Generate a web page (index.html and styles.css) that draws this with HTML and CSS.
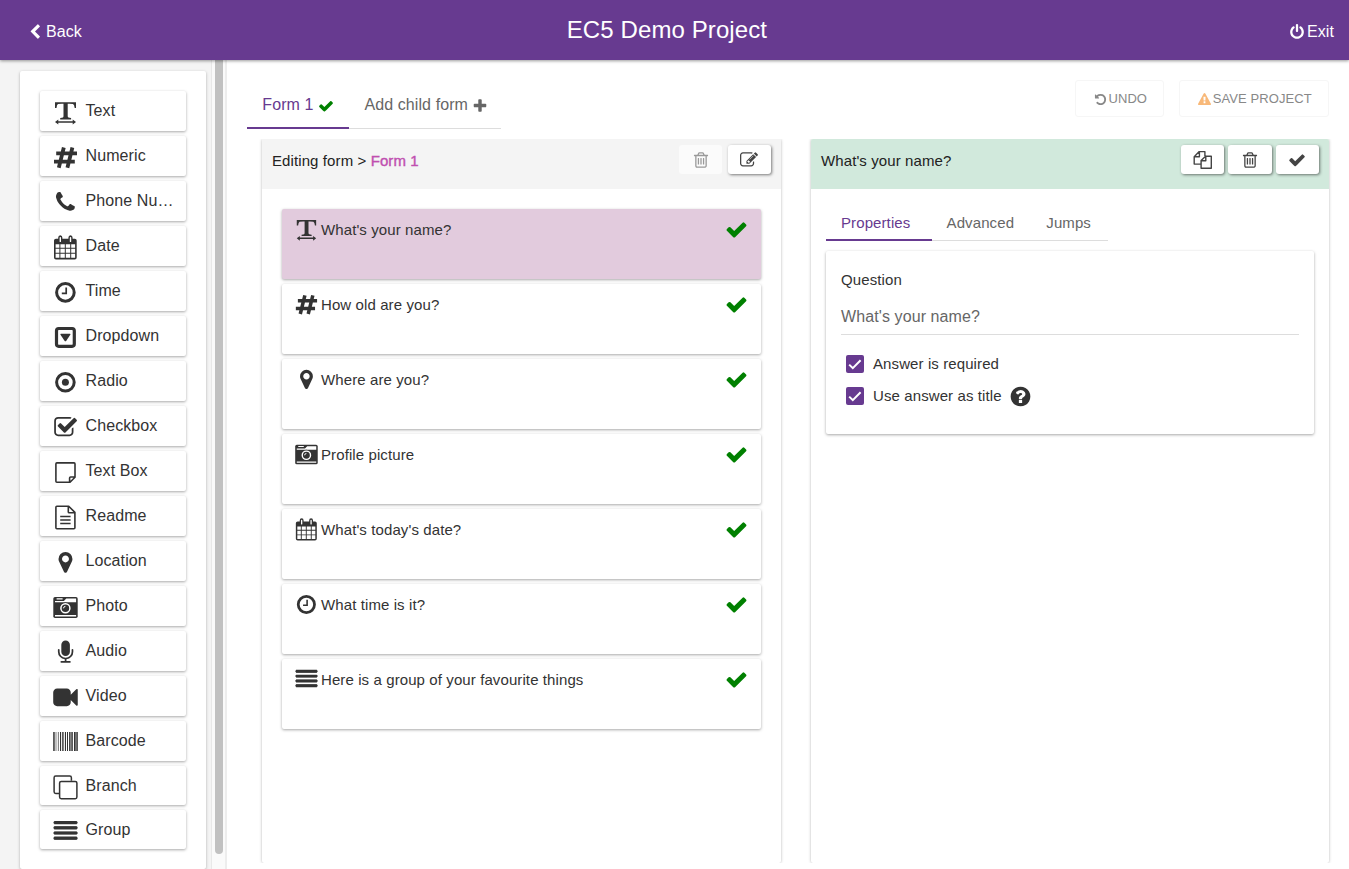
FILE: index.html
```
<!DOCTYPE html>
<html lang="en">
<head>
<meta charset="utf-8">
<title>EC5 Demo Project</title>
<link rel="stylesheet" href="styles.css">
</head>
<body>
<svg class="sprite" aria-hidden="true">
  <symbol id="text" viewBox="0 0 26 26"><path d="M3 2.300h21v5.800h-1.300q-.4-3.400-1.700-4-1-.4-5.300-.3V16q0 1.300.8 1.600.9.400 2.600.5v1.400H8.200v-1.400q2-.1 2.700-.5.600-.3.600-1.600V3.800q-4.300-.1-5.500.300-1.200.6-1.500 4H3z"/><path d="M3 22l3.300-2.600v1.800h14.400v-1.800l3.300 2.600-3.300 2.600v-1.800H6.300v1.800z"/></symbol>
  <symbol id="hash" viewBox="0 0 26 26"><path d="M11.800 2.500L6.800 22.700M20.400 2.500L15.400 22.700M4.200 8.400H25M2 16.700H22.800" fill="none" stroke="currentColor" stroke-width="3.800"/></symbol>
  <symbol id="phone" viewBox="0 0 26 26"><path transform="translate(1.400 .2) scale(.0134)" d="M1600 1240q0 27-10 70.500t-21 68.500q-21 50-122 106-94 51-186 51-27 0-53-3.500t-57.500-12.500-47-14.500-55.500-20.500-49-18q-98-35-175-83-127-79-264-216t-216-264q-48-77-83-175-3-9-18-49t-20.500-55.500-14.500-47-12.500-57.500-3.500-53q0-92 51-186 56-101 106-122 25-11 68.500-21t70.500-10q14 0 21 3 18 6 53 76 11 19 30 54t35 63.500 31 53.500q3 4 17.500 25t21.500 35.500 7 28.500q0 20-28.500 50t-62 55-62 53-28.500 46q0 9 5 22.500t8.500 20.500 14 24 11.500 19q76 137 174 235t235 174q2 1 19 11.500t24 14 20.500 8.500 22.500 5q18 0 46-28.500t53-62 55-62 50-28.500q14 0 28.500 7t35.500 21.500 25 17.500q25 15 53.500 31t63.500 35 54 30q70 35 76 53 3 7 3 21z"/></symbol>
  <symbol id="calendar" viewBox="0 0 26 26"><path fill-rule="evenodd" d="M4 3.700h2.200V2.800Q6.200.3 8.300.3t2.100 2.500v.9h6V2.800q0-2.500 2.100-2.500t2.100 2.500v.9h2.200q1.900 0 1.900 1.900v17q0 1.900-1.900 1.900H4q-2 0-2-1.900v-17q0-1.900 2-1.900zM7.600 2.800v3.600q0 .7.700.7t.7-.7V2.800q0-.8-.7-.8t-.7.8zm10.200 0v3.600q0 .7.700.7t.7-.7V2.800q0-.8-.7-.8t-.7.8zM3.600 9.200v3.600h3.800V9.200zm4.800 0v3.600h4.400V9.200zm5.400 0v3.600h4.400V9.200zm5.400 0v3.600h3.900V9.200zM3.600 13.800v4h3.800v-4zm4.800 0v4h4.400v-4zm5.400 0v4h4.400v-4zm5.400 0v4h3.900v-4zM3.600 18.800v4h3.800v-4zm4.800 0v4h4.400v-4zm5.400 0v4h4.400v-4zm5.400 0v4h3.900v-4z"/></symbol>
  <symbol id="clock" viewBox="0 0 26 26"><g fill="none" stroke="currentColor"><circle cx="13.400" cy="12.400" r="8.800" stroke-width="3"/><path d="M14.200 7.400v5.900H9.800" stroke-width="1.700"/></g></symbol>
  <symbol id="dropdown" viewBox="0 0 26 26"><rect x="4.500" y="3.500" width="17.800" height="17.800" rx="2.200" fill="none" stroke="currentColor" stroke-width="3.200"/><path d="M9 8.800h8.800q1 0 .5 1l-4 5.900q-.9 1.200-1.800 0L8.500 9.800q-.5-1 .5-1z"/></symbol>
  <symbol id="radio" viewBox="0 0 26 26"><circle cx="13.400" cy="12.300" r="8.800" fill="none" stroke="currentColor" stroke-width="3"/><circle cx="13.400" cy="12.300" r="3.500"/></symbol>
  <symbol id="checkbox" viewBox="0 0 26 26"><path transform="translate(1.300 .2) scale(.0137)" d="M1472 930v318q0 119-84.500 203.500t-203.500 84.500h-832q-119 0-203.500-84.500t-84.500-203.500v-832q0-119 84.500-203.500t203.500-84.500h832q63 0 117 25 15 7 18 23 3 17-9 29l-49 49q-10 10-23 10-3 0-9-2-23-6-45-6h-832q-66 0-113 47t-47 113v832q0 66 47 113t113 47h832q66 0 113-47t47-113v-254q0-13 9-22l64-64q10-10 23-10 6 0 12 3 20 8 20 29zm231-489l-814 814q-24 24-57 24t-57-24l-430-430q-24-24-24-57t24-57l110-110q24-24 57-24t57 24l263 263 647-647q24-24 57-24t57 24l110 110q24 24 24 57t-24 57z"/></symbol>
  <symbol id="note" viewBox="0 0 26 26"><path d="M4.900 2.900h17.100q1 0 1 1v13.300l-5 5H4.900q-1 0-1-1V3.900q0-1 1-1zM17.600 22v-4q0-1 1-1h4.200" fill="none" stroke="currentColor" stroke-width="1.600"/></symbol>
  <symbol id="file" viewBox="0 0 26 26"><path d="M4.900 1.200h11.800l6.200 6.200v15.300q0 1-1 1h-17q-1 0-1-1V2.200q0-1 1-1zM16.300 1.300v5.600q0 .9.900.9h5.500M8.200 11.500h10.400M8.200 15h10.400M8.200 18.500h10.400" fill="none" stroke="currentColor" stroke-width="1.600"/></symbol>
  <symbol id="pin" viewBox="0 0 26 26"><path transform="translate(1.300 .2) scale(.0136)" d="M1152 640q0-106-75-181t-181-75-181 75-75 181 75 181 181 75 181-75 75-181zm256 0q0 109-33 179l-364 774q-16 33-47.500 52t-67.500 19-67.500-19-46.500-52l-365-774q-33-70-33-179 0-212 150-362t362-150 362 150 150 362z"/></symbol>
  <symbol id="photo" viewBox="0 0 26 26"><rect x="1.300" y="2" width="24.400" height="21" rx="1.700"/><path d="M3 7.300V5.900h8.900l2.400-2.300h9.800v3.700zM4.600 3.300h6v1.100h-6zM3 20h21.100v1.400H3z" fill="#fff"/><circle cx="13.400" cy="13.300" r="5.900"/><circle cx="13.400" cy="13.300" r="4.500" fill="none" stroke="#fff" stroke-width="1.500"/><path d="M11.500 13.300q0-1.900 1.900-1.900" fill="none" stroke="#fff" stroke-width="1"/></symbol>
  <symbol id="mic" viewBox="0 0 26 26"><path transform="translate(1.600 .5) scale(.0134)" d="M1472 704v128q0 221-147.500 384.500t-364.500 187.500v132h256q26 0 45 19t19 45-19 45-45 19h-640q-26 0-45-19t-19-45 19-45 45-19h256v-132q-217-24-364.500-187.500t-147.500-384.500v-128q0-26 19-45t45-19 45 19 19 45v128q0 185 131.500 316.500t316.500 131.500 316.500-131.500 131.500-316.500v-128q0-26 19-45t45-19 45 19 19 45zm-256-384v512q0 132-94 226t-226 94-226-94-94-226v-512q0-132 94-226t226-94 226 94 94 226z"/></symbol>
  <symbol id="video" viewBox="0 0 26 26"><path transform="translate(1.200 .1) scale(.0137)" d="M1792 352v1088q0 42-39 59-13 5-25 5-27 0-45-19l-403-403v166q0 119-84.500 203.500t-203.500 84.500h-704q-119 0-203.500-84.500t-84.500-203.500v-704q0-119 84.500-203.500t203.500-84.500h704q119 0 203.500 84.500t84.500 203.500v165l403-402q18-19 45-19 12 0 25 5 39 17 39 59z"/></symbol>
  <symbol id="barcode" viewBox="0 0 26 26"><path d="M1.200 2h1.500v19H1.200zM3.700 2h.6v19h-.6zM5.900 2h.7v19h-.7zM8 2h1.100v19H8zM10.200 2h1.400v19h-1.400zM12.900 2h1.100v19h-1.100zM15 2h1v19h-1zM17.100 2h1.500v19h-1.500zM19.300 2h1.500v19h-1.500zM22 2h1.700v19H22zM24.300 2h1.500v19h-1.500z"/></symbol>
  <symbol id="branch" viewBox="0 0 26 26"><g fill="none" stroke="currentColor" stroke-width="1.500"><rect x="7.600" y="6.400" width="17.300" height="17.300" rx="1.600"/><path d="M7 18.400H3.700Q2.100 18.400 2.100 16.800V2.700Q2.100 1.100 3.700 1.100h14Q19.400 1.100 19.400 2.700v3"/></g></symbol>
  <symbol id="group" viewBox="0 0 26 26"><path d="M2.200 3.600h22.600M2.200 8.800h22.600M2.200 14h22.600M2.200 19.200h22.600" fill="none" stroke="currentColor" stroke-width="3.200"/><path d="M2.600 3.600h21.900M2.600 8.800h21.900M2.600 14h21.900M2.600 19.200h21.900" fill="none" stroke="currentColor" stroke-width="2.400" stroke-linecap="round"/></symbol>
  <symbol id="check" viewBox="0 0 1792 1792"><path d="M1671 566q0 40-28 68l-724 724-136 136q-28 28-68 28t-68-28l-136-136-362-362q-28-28-28-68t28-68l136-136q28-28 68-28t68 28l294 295 656-657q28-28 68-28t68 28l136 136q28 28 28 68z"/></symbol>
  <symbol id="plus" viewBox="0 0 1792 1792"><path d="M1600 736v192q0 40-28 68t-68 28h-416v416q0 40-28 68t-68 28h-192q-40 0-68-28t-28-68v-416h-416q-40 0-68-28t-28-68v-192q0-40 28-68t68-28h416v-416q0-40 28-68t68-28h192q40 0 68 28t28 68v416h416q40 0 68 28t28 68z"/></symbol>
  <symbol id="edit" viewBox="0 0 1792 1792"><path d="M888 1184l116-116-152-152-116 116v56h96v96h56zm440-720q-16-16-33 1l-350 350q-17 17-1 33t33-1l350-350q17-17 1-33zm80 594v190q0 119-84.500 203.500t-203.500 84.500h-832q-119 0-203.500-84.500t-84.500-203.500v-832q0-119 84.500-203.500t203.500-84.500h832q63 0 117 25 15 7 18 23 3 17-9 29l-49 49q-14 14-32 8-23-6-45-6h-832q-66 0-113 47t-47 113v832q0 66 47 113t113 47h832q66 0 113-47t47-113v-126q0-13 9-22l64-64q15-15 35-7t20 29zm-96-738l288 288-672 672h-288v-288zm444 132l-92 92-288-288 92-92q28-28 68-28t68 28l152 152q28 28 28 68t-28 68z"/></symbol>
  <symbol id="trash" viewBox="0 0 1792 1792"><path d="M704 736v576q0 14-9 23t-23 9h-64q-14 0-23-9t-9-23v-576q0-14 9-23t23-9h64q14 0 23 9t9 23zm256 0v576q0 14-9 23t-23 9h-64q-14 0-23-9t-9-23v-576q0-14 9-23t23-9h64q14 0 23 9t9 23zm256 0v576q0 14-9 23t-23 9h-64q-14 0-23-9t-9-23v-576q0-14 9-23t23-9h64q14 0 23 9t9 23zm128 724v-948h-896v948q0 22 7 40.500t14.500 27 10.500 8.500h832q3 0 10.500-8.500t14.500-27 7-40.500zm-672-1076h448l-48-117q-7-9-17-11h-317q-10 2-17 11zm928 32v64q0 14-9 23t-23 9h-96v948q0 83-47 143.500t-113 60.500h-832q-66 0-113-58.500t-47-141.500v-952h-96q-14 0-23-9t-9-23v-64q0-14 9-23t23-9h309l70-167q15-37 54-63t79-26h320q40 0 79 26t54 63l70 167h309q14 0 23 9t9 23z"/></symbol>
  <symbol id="copy" viewBox="0 0 20 20"><path d="M7.400 14.100H1.200V6.700L6.200 1.600h5.700v4.500M6.400 1.700v5.100H1.400M8.100 18.200V10.600L12.600 6.200h5.700v12zM12.800 6.300v4.400H8.200" fill="none" stroke="currentColor" stroke-width="1.400" stroke-linejoin="round"/></symbol>
  <symbol id="undo" viewBox="0 0 1792 1792"><path d="M1664 896q0 156-61 298t-164 245-245 164-298 61q-172 0-327-72.500t-264-204.500q-7-10-6.500-22.500t8.500-20.500l137-138q10-9 25-9 16 2 23 12 73 95 179 147t225 52q104 0 198.500-40.500t163.500-109.500 109.500-163.500 40.500-198.500-40.500-198.500-109.500-163.500-163.500-109.500-198.500-40.500q-98 0-188 35.500t-160 101.500l137 138q31 30 14 69-17 40-59 40h-448q-26 0-45-19t-19-45v-448q0-42 40-59 39-17 69 14l130 129q107-101 244.500-156.500t284.500-55.500q156 0 298 61t245 164 164 245 61 298z"/></symbol>
  <symbol id="warning" viewBox="0 0 1792 1792"><path d="M1024 1375v-190q0-14-9.500-23.500t-22.500-9.500h-192q-13 0-22.500 9.500t-9.500 23.500v190q0 14 9.500 23.500t22.500 9.500h192q13 0 22.500-9.500t9.500-23.500zm-2-374l18-459q0-12-10-19-13-11-24-11h-220q-11 0-24 11-10 7-10 21l17 457q0 10 10 16.500t24 6.500h185q14 0 23.500-6.500t10.500-16.500zm-14-934l768 1408q35 63-2 126-17 29-46.500 46t-63.500 17h-1536q-34 0-63.500-17t-46.500-46q-37-63-2-126l768-1408q17-31 47-49t65-18 65 18 47 49z"/></symbol>
  <symbol id="power" viewBox="0 0 1792 1792"><path d="M1664 896q0 156-61 298t-164 245-245 164-298 61-298-61-245-164-164-245-61-298q0-182 80.500-343t226.500-270q43-32 95.500-25t83.500 50q32 42 24.500 94.500t-49.500 84.500q-98 74-151.500 181t-53.500 228q0 104 40.500 198.500t109.500 163.500 163.500 109.500 198.500 40.500 198.500-40.500 163.500-109.500 109.500-163.500 40.500-198.500q0-121-53.500-228t-151.500-181q-42-32-49.500-84.500t24.500-94.500q31-43 84-50t95 25q146 109 226.500 270t80.500 343zm-640-768v640q0 52-38 90t-90 38-90-38-38-90v-640q0-52 38-90t90-38 90 38 38 90z"/></symbol>
  <symbol id="chevron" viewBox="0 0 1792 1792"><path d="M1427 301l-531 531 531 531q19 19 19 45t-19 45l-166 166q-19 19-45 19t-45-19l-742-742q-19-19-19-45t19-45l742-742q19-19 45-19t45 19l166 166q19 19 19 45t-19 45z"/></symbol>
  <symbol id="help" viewBox="0 0 1792 1792"><path d="M1024 1376v-192q0-14-9-23t-23-9h-192q-14 0-23 9t-9 23v192q0 14 9 23t23 9h192q14 0 23-9t9-23zm256-672q0-88-55.500-163t-138.500-116-170-41q-243 0-371 213-15 24 8 42l132 100q7 6 19 6 16 0 25-12 53-68 86-92 34-24 86-24 48 0 85.500 26t37.500 59q0 38-20 61t-68 45q-63 28-115.500 86.500t-52.500 125.500v36q0 14 9 23t23 9h192q14 0 23-9t9-23q0-19 21.500-49.500t54.500-49.500q32-18 49-28.500t46-35 44.500-48 28-60.500 12.500-81zm384 192q0 209-103 385.500t-279.500 279.500-385.500 103-385.500-103-279.500-279.500-103-385.500 103-385.500 279.500-279.500 385.500-103 385.500 103 279.500 279.500 103 385.500z"/></symbol>
  <symbol id="tick" viewBox="0 0 18 18"><path d="M3.200 9.600l3.600 3.600 7.800-8" fill="none" stroke="currentColor" stroke-width="2"/></symbol>
</svg>

<header class="topbar">
  <a class="topbar-back"><svg class="i16"><use href="#chevron"/></svg><span>Back</span></a>
  <h1 class="topbar-title">EC5 Demo Project</h1>
  <a class="topbar-exit"><svg class="i16"><use href="#power"/></svg><span>Exit</span></a>
</header>

<div class="layout">
  <aside class="sidebar">
    <ul class="inputs">
      <li class="input-card"><svg class="input-icon"><use href="#text"/></svg><span>Text</span></li>
      <li class="input-card"><svg class="input-icon"><use href="#hash"/></svg><span>Numeric</span></li>
      <li class="input-card"><svg class="input-icon"><use href="#phone"/></svg><span>Phone Nu…</span></li>
      <li class="input-card"><svg class="input-icon"><use href="#calendar"/></svg><span>Date</span></li>
      <li class="input-card"><svg class="input-icon"><use href="#clock"/></svg><span>Time</span></li>
      <li class="input-card"><svg class="input-icon"><use href="#dropdown"/></svg><span>Dropdown</span></li>
      <li class="input-card"><svg class="input-icon"><use href="#radio"/></svg><span>Radio</span></li>
      <li class="input-card"><svg class="input-icon"><use href="#checkbox"/></svg><span>Checkbox</span></li>
      <li class="input-card"><svg class="input-icon"><use href="#note"/></svg><span>Text Box</span></li>
      <li class="input-card"><svg class="input-icon"><use href="#file"/></svg><span>Readme</span></li>
      <li class="input-card"><svg class="input-icon"><use href="#pin"/></svg><span>Location</span></li>
      <li class="input-card"><svg class="input-icon"><use href="#photo"/></svg><span>Photo</span></li>
      <li class="input-card"><svg class="input-icon"><use href="#mic"/></svg><span>Audio</span></li>
      <li class="input-card"><svg class="input-icon"><use href="#video"/></svg><span>Video</span></li>
      <li class="input-card"><svg class="input-icon"><use href="#barcode"/></svg><span>Barcode</span></li>
      <li class="input-card short"><svg class="input-icon"><use href="#branch"/></svg><span>Branch</span></li>
      <li class="input-card short"><svg class="input-icon"><use href="#group"/></svg><span>Group</span></li>
    </ul>
  </aside>
  <div class="scrollbar"><div class="scrollbar-thumb"></div></div>

  <main class="main">
    <div class="toolbar">
      <nav class="tabs form-tabs">
        <a class="tab active">Form 1 <svg class="i16 green"><use href="#check"/></svg></a>
        <a class="tab">Add child form<svg class="i16 plus"><use href="#plus"/></svg></a>
      </nav>
      <div class="actions">
        <button class="action undo"><svg class="i13"><use href="#undo"/></svg>UNDO</button>
        <button class="action save"><svg class="i13 orange"><use href="#warning"/></svg>SAVE PROJECT</button>
      </div>
    </div>

    <div class="panels">
      <section class="panel">
        <header class="panel-head">
          <span class="panel-title">Editing form &gt; <b class="form-name">Form 1</b></span>
          <div class="panel-buttons">
            <button class="icon-button disabled"><svg class="i18"><use href="#trash"/></svg></button>
            <button class="icon-button edit"><svg class="i18"><use href="#edit"/></svg></button>
          </div>
        </header>
        <ul class="questions">
          <li class="question selected"><svg class="question-icon"><use href="#text"/></svg><span>What's your name?</span><svg class="state"><use href="#check"/></svg></li>
          <li class="question"><svg class="question-icon"><use href="#hash"/></svg><span>How old are you?</span><svg class="state"><use href="#check"/></svg></li>
          <li class="question"><svg class="question-icon"><use href="#pin"/></svg><span>Where are you?</span><svg class="state"><use href="#check"/></svg></li>
          <li class="question"><svg class="question-icon"><use href="#photo"/></svg><span>Profile picture</span><svg class="state"><use href="#check"/></svg></li>
          <li class="question"><svg class="question-icon"><use href="#calendar"/></svg><span>What's today's date?</span><svg class="state"><use href="#check"/></svg></li>
          <li class="question"><svg class="question-icon"><use href="#clock"/></svg><span>What time is it?</span><svg class="state"><use href="#check"/></svg></li>
          <li class="question"><svg class="question-icon"><use href="#group"/></svg><span>Here is a group of your favourite things</span><svg class="state"><use href="#check"/></svg></li>
        </ul>
      </section>

      <section class="panel details">
        <header class="panel-head">
          <span class="panel-title">What's your name?</span>
          <div class="panel-buttons">
            <button class="icon-button"><svg class="i20"><use href="#copy"/></svg></button>
            <button class="icon-button wide"><svg class="i18"><use href="#trash"/></svg></button>
            <button class="icon-button done"><svg class="i18"><use href="#check"/></svg></button>
          </div>
        </header>
        <nav class="tabs detail-tabs">
          <a class="tab active">Properties</a>
          <a class="tab">Advanced</a>
          <a class="tab">Jumps</a>
        </nav>
        <div class="properties">
          <div class="label">Question</div>
          <div class="field">What's your name?</div>
          <div class="option"><span class="box"><svg><use href="#tick"/></svg></span><span>Answer is required</span></div>
          <div class="option"><span class="box"><svg><use href="#tick"/></svg></span><span>Use answer as title</span><svg class="help"><use href="#help"/></svg></div>
        </div>
      </section>
    </div>
  </main>
</div>
</body>
</html>
```
FILE: styles.css
```
* { box-sizing: border-box; }

body {
  margin: 0;
  height: 869px;
  overflow: hidden;
  display: flex;
  flex-direction: column;
  background: #fff;
  color: #333;
  font: 15px/20px "Liberation Sans", Arial, sans-serif;
  letter-spacing: .1px;
}

ul { list-style: none; margin: 0; padding: 0; }
svg { display: block; flex: none; fill: currentColor; }
button { font: inherit; letter-spacing: inherit; color: inherit; border: 0; margin: 0; padding: 0; }

.sprite { position: absolute; width: 0; height: 0; }
.i13 { width: 13px; height: 13px; }
.i16 { width: 16px; height: 16px; }
.i18 { width: 18px; height: 18px; }
.i20 { width: 20px; height: 20px; }
.green { color: green; }
.orange { color: #f8b878; }

.topbar {
  position: relative;
  z-index: 1;
  flex: none;
  height: 60px;
  display: grid;
  grid-template-columns: 200px 1fr 200px;
  padding: 0 15px 0 27.400px;
  background: #673a90;
  color: #fff;
  box-shadow: 0 1px 3px rgba(0, 0, 0, .4);
  font-size: 16px;
}
.topbar-back, .topbar-exit { display: flex; align-items: center; gap: 2.500px; padding-top: 3px; }
.topbar-exit { justify-content: flex-end; gap: 2px; }
.topbar-title { margin: 0; font-size: 24px; font-weight: 400; line-height: 60px; text-align: center; padding-right: 27.500px; }

.layout { flex: 1; min-height: 0; display: flex; }

.sidebar { width: 211px; flex: none; padding: 11px 5px 0 20px; background: #f4f4f4; }
.inputs {
  height: 798px;
  padding: 20px;
  display: flex;
  flex-direction: column;
  gap: 5px;
  background: #fff;
  border-radius: 2px;
  box-shadow: 0 1px 3px rgba(0, 0, 0, .3);
}
.input-card {
  flex: none;
  height: 40px;
  display: flex;
  align-items: flex-start;
  padding: 9px 0 0 12px;
  font-size: 16px;
  background: #fff;
  border-radius: 2px;
  box-shadow: 0 1px 3px rgba(0, 0, 0, .35);
}
.input-card span { margin-left: 7.500px; line-height: 22px; white-space: nowrap; }
.input-card.short { height: 39px; }
.input-icon { width: 26px; height: 26px; }

.scrollbar {
  width: 16px;
  flex: none;
  padding-left: 3px;
  background: #fafafa;
  border-left: 1px solid #e8e8e8;
  border-right: 2px solid #ededed;
}
.scrollbar-thumb { width: 8px; height: 794px; background: #c1c1c1; border-radius: 0 0 4px 4px; }

.main { flex: 1; min-width: 0; padding: 20px 20px 6px; display: flex; flex-direction: column; background: #fff; }
.toolbar { height: 49px; flex: none; display: flex; justify-content: space-between; align-items: flex-start; }
.tabs { display: flex; color: #666; }
.tab { display: flex; align-items: center; border-bottom: 1px solid #ddd; }
.tab.active { color: #673a90; border-bottom: 2px solid #673a90; }
.form-tabs { height: 49px; font-size: 16px; }
.form-tabs .tab { padding: 2px 13px 0 15.300px; }
.form-tabs .tab.active { padding: 3px 15px 0 15.300px; gap: 4.500px; }
.form-tabs svg { margin-top: 2px; }
.form-tabs .plus { margin-left: 3.500px; }

.actions { display: flex; gap: 15px; }
.action {
  display: flex;
  align-items: center;
  justify-content: center;
  gap: 1.500px;
  height: 37px;
  background: #fff;
  border: 1px solid #f6f6f6;
  border-radius: 3px;
  color: #888;
  font-size: 13px;
}
.action svg { margin-top: 1px; }
.undo { width: 89px; padding-left: 2px; }
.save { width: 150px; padding-left: 2px; }

.panels { flex: 1; min-height: 0; margin-top: 10px; padding-left: 15px; display: flex; gap: 30px; }
.panel { width: 519px; border-radius: 2px; box-shadow: 0 0 3px rgba(0, 0, 0, .3); clip-path: inset(0 -4px 0 -4px); }
.details { width: 518px; }
.panel-head { display: flex; justify-content: space-between; height: 50px; padding: 6px 10px; background: #f4f4f4; color: #222; }
.details .panel-head { background: #d1e9dc; border-radius: 2px 2px 0 0; }
.panel-title { padding-top: 6px; }
.form-name { color: #c04fb0; font-weight: 400; -webkit-text-stroke: .4px #c04fb0; }
.panel-buttons { display: flex; gap: 4px; }
.icon-button {
  width: 43px;
  height: 29px;
  display: flex;
  align-items: center;
  justify-content: center;
  background: #fff;
  color: #444;
  border-radius: 3px;
  box-shadow: 1px 1px 3px rgba(0, 0, 0, .5);
}
.icon-button.wide { width: 44px; }
.icon-button.edit, .icon-button.done { padding-right: 1px; }
.icon-button.disabled { background: #fbfbfb; color: #999; box-shadow: none; margin-right: 2px; }

.questions { padding: 20px; display: flex; flex-direction: column; gap: 5px; }
.question {
  display: flex;
  align-items: flex-start;
  height: 70px;
  padding: 9px 13px 0 12px;
  background: #fff;
  border-radius: 2px;
  box-shadow: 0 1px 3px rgba(0, 0, 0, .35);
}
.question.selected { background: #e2cbdd; }
.question-icon { width: 24px; height: 24px; }
.question span { margin-left: 3px; padding-top: 2px; }
.state { width: 23px; height: 23px; margin-left: auto; color: green; }

.detail-tabs { margin: 17px 0 0 15px; height: 35px; }
.detail-tabs .tab { padding: 0 17.500px 0 14.700px; }
.detail-tabs .tab.active { padding: 1px 21.500px 0 15px; }
.properties {
  margin: 10px 15px 0;
  height: 183px;
  padding: 19px 15px 0;
  background: #fff;
  border-radius: 2px;
  box-shadow: 0 1px 3px rgba(0, 0, 0, .35);
}
.field { height: 45px; margin-bottom: 13px; padding-top: 17px; font-size: 16px; color: #666; border-bottom: 1px solid #ddd; }
.option { display: flex; align-items: center; height: 32px; padding-left: 5px; }
.box { width: 18px; height: 18px; margin-right: 9px; background: #673a90; color: #fff; border-radius: 2px; }
.box svg { width: 18px; height: 18px; }
.help { width: 23px; height: 23px; margin: 1px 0 0 7px; }
```
